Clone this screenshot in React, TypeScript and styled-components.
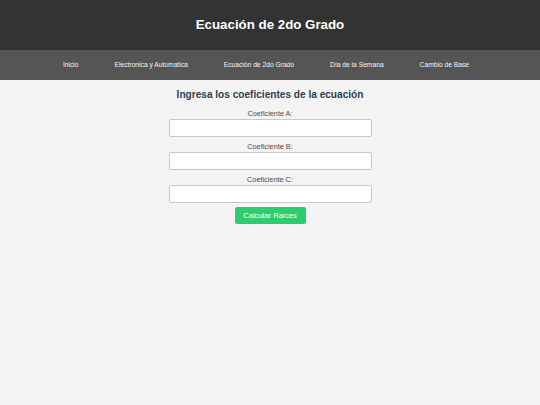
import { createGlobalStyle, styled } from "styled-components";

const GlobalStyle = createGlobalStyle`
  html, body {
    margin: 0;
    padding: 0;
    background-color: #f4f4f4;
    font-family: "Liberation Sans", Arial, sans-serif;
  }
`;

const Header = styled.header`
  height: 50px;
  background-color: #333333;
  display: flex;
  align-items: center;
  justify-content: center;
`;

const Title = styled.h1`
  margin: 0;
  font-size: 13.3px;
  font-weight: 700;
  color: #ffffff;
  line-height: 16px;
`;

const NavBar = styled.nav`
  height: 30px;
  background-color: #555555;
  display: flex;
  align-items: center;
  justify-content: center;
  gap: 36px;
  padding-right: 8px;
  border-bottom: 1px solid #f8f8f8;
`;

const NavLink = styled.a`
  font-size: 6.7px;
  line-height: 8px;
  color: #f4f4f4;
  text-decoration: none;
`;

const Main = styled.main`
  display: flex;
  flex-direction: column;
  align-items: center;
  padding-top: 8px;
`;

const Heading = styled.h2`
  margin: 0 0 8px;
  font-size: 10.1px;
  line-height: 12px;
  font-weight: 700;
  color: #2c3e50;
`;

const Form = styled.form`
  display: flex;
  flex-direction: column;
  align-items: center;
  width: 203px;
`;

const Field = styled.div`
  display: flex;
  flex-direction: column;
  align-items: center;
`;

const Label = styled.label<{ $first?: boolean }>`
  display: block;
  margin-top: ${({ $first }) => ($first ? "0" : "5px")};
  margin-bottom: 1px;
  font-size: 7.3px;
  line-height: 9px;
  color: #4a4a4a;
`;

const Input = styled.input`
  display: block;
  box-sizing: border-box;
  width: 203px;
  height: 18px;
  margin: 0;
  border: 1px solid #c8c8c8;
  border-radius: 2px;
  background-color: #ffffff;
`;

const SubmitButton = styled.button`
  margin-top: 4px;
  width: 71px;
  height: 17px;
  padding: 0;
  border: none;
  border-radius: 2px;
  background-color: #2ecc71;
  color: #ffffff;
  font-family: "Liberation Sans", Arial, sans-serif;
  font-size: 7.6px;
  cursor: pointer;
`;

const links = [
  "Inicio",
  "Electronica y Automatica",
  "Ecuación de 2do Grado",
  "Día de la Semana",
  "Cambio de Base",
];

const fields = ["A", "B", "C"];

const App = () => {
  return (
    <>
      <GlobalStyle />
      <Header>
        <Title>Ecuación de 2do Grado</Title>
      </Header>
      <NavBar>
        {links.map((link) => (
          <NavLink key={link} href="#">
            {link}
          </NavLink>
        ))}
      </NavBar>
      <Main>
        <Heading>Ingresa los coeficientes de la ecuación</Heading>
        <Form onSubmit={(e) => e.preventDefault()}>
          {fields.map((f, i) => (
            <Field key={f}>
              <Label $first={i === 0} htmlFor={`coef-${f}`}>
                Coeficiente {f}:
              </Label>
              <Input id={`coef-${f}`} type="number" />
            </Field>
          ))}
          <SubmitButton type="submit">Calcular Raíces</SubmitButton>
        </Form>
      </Main>
    </>
  );
};

export default App;
